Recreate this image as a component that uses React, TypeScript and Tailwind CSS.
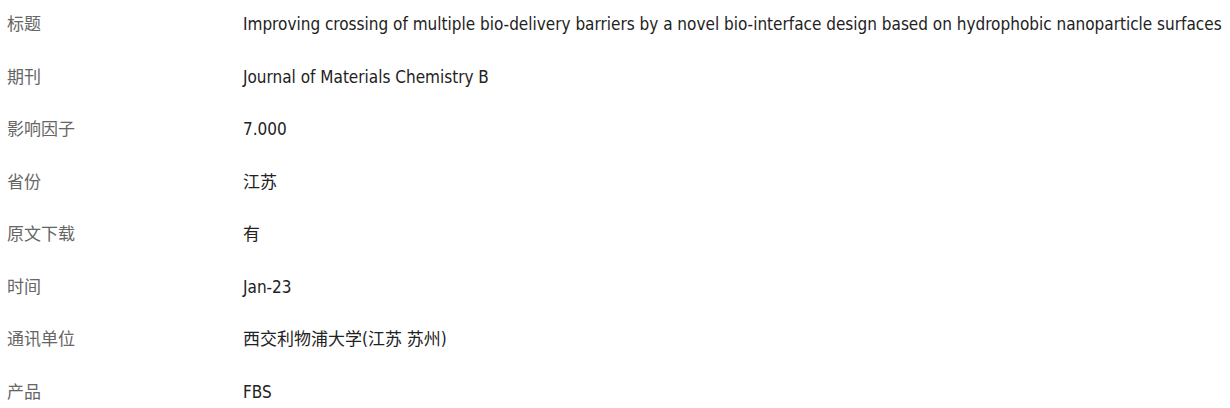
const rows = [
  { label: "标题", value: "Improving crossing of multiple bio-delivery barriers by a novel bio-interface design based on hydrophobic nanoparticle surfaces" },
  { label: "期刊", value: "Journal of Materials Chemistry B" },
  { label: "影响因子", value: "7.000" },
  { label: "省份", value: "江苏" },
  { label: "原文下载", value: "有" },
  { label: "时间", value: "Jan-23" },
  { label: "通讯单位", value: "西交利物浦大学(江苏 苏州)" },
  { label: "产品", value: "FBS" },
]

export default function App() {
  return (
    <div
      className="bg-white w-[1230px] h-[408px] overflow-hidden text-[17px]"
      style={{ fontFamily: '"DejaVu Sans Condensed", "Noto Sans CJK SC", sans-serif' }}
    >
      <div className="-mt-[1px]">
        {rows.map((row) => (
          <div key={row.label} className="flex items-center h-[52.45px] whitespace-nowrap">
            <div className="w-[243px] shrink-0 pl-[7px] text-[#666666]">{row.label}</div>
            <div className="text-[#222222]">{row.value}</div>
          </div>
        ))}
      </div>
    </div>
  )
}
